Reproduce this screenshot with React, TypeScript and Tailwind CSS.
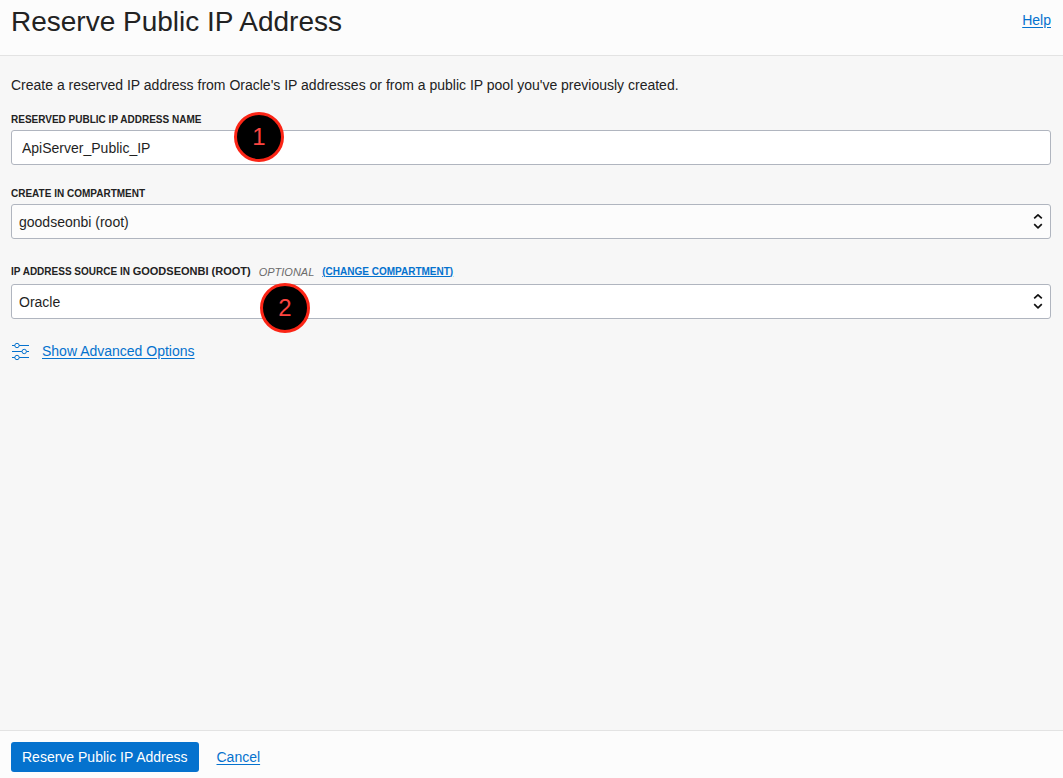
import type { ReactNode } from 'react';

const control =
  'block h-[35px] w-full appearance-none rounded-[3px] border border-[#b0b5bf] text-sm text-[#1f1f1f] outline-none focus:border-[#0572ce]';
const labelText = 'text-[10px] leading-4 font-bold uppercase text-[#222]';
const link = 'text-[#0572ce] underline underline-offset-2';

function StepBadge({ step, className }: { step: number; className: string }) {
  return (
    <span
      className={`pointer-events-none absolute flex size-[50px] items-center justify-center rounded-full border-3 border-[#fb2516] bg-black text-2xl text-[#fc4540] ${className}`}
    >
      {step}
    </span>
  );
}

function SelectBox({ id, className, children }: { id: string; className: string; children: ReactNode }) {
  return (
    <div className="relative">
      <select id={id} className={`${control} pr-8 pl-[7px] ${className}`}>
        {children}
      </select>
      <svg
        className="pointer-events-none absolute top-[9px] right-[8px]"
        width="10"
        height="17"
        viewBox="0 0 10 17"
        fill="none"
        stroke="#111"
        strokeWidth="1.7"
        strokeLinejoin="round"
        aria-hidden="true"
      >
        <path d="M1.2 5.4 5 1.8 8.8 5.4M1.2 11.2 5 14.8 8.8 11.2" />
      </svg>
    </div>
  );
}

function SlidersIcon() {
  return (
    <svg width="19" height="20" viewBox="0 0 19 20" fill="none" stroke="#0572ce" strokeWidth="1" aria-hidden="true">
      <path d="M1 4.500h2.900M8.100 4.500H18M1 10.500h9.900M15.500 10.500H18M1 16.500h2.900M8.100 16.500H18" />
      <circle cx="6" cy="4.500" r="2.200" />
      <circle cx="13.200" cy="10.500" r="2.200" />
      <circle cx="6" cy="16.500" r="2.200" />
    </svg>
  );
}

export default function App() {
  return (
    <form
      className="flex min-h-screen flex-col bg-[#f7f7f7] font-['Liberation_Sans',Arial,sans-serif] text-sm text-[#222]"
      onSubmit={(event) => event.preventDefault()}
    >
      <header className="flex items-start justify-between border-b border-[#e3e3e3] bg-[#fcfcfc] pr-3 pb-3 pl-[11px]">
        <h1 className="text-[28px] leading-[43px]">Reserve Public IP Address</h1>
        <a href="#help" className={`pt-[10px] leading-5 ${link}`}>
          Help
        </a>
      </header>

      <main className="grow pt-[19px] pr-3 pl-[11px]">
        <p className="leading-5">
          Create a reserved IP address from Oracle's IP addresses or from a public IP pool you've previously created.
        </p>

        <div className="relative mt-[17px] flex flex-col gap-[2px]">
          <label htmlFor="ip-name" className={labelText}>
            Reserved Public IP Address Name
          </label>
          <input id="ip-name" type="text" defaultValue="ApiServer_Public_IP" className={`${control} bg-white px-[10px]`} />
          <StepBadge step={1} className="top-0 left-[223px]" />
        </div>

        <div className="mt-[21px] flex flex-col gap-[2px]">
          <label htmlFor="compartment" className={labelText}>
            Create in Compartment
          </label>
          <SelectBox id="compartment" className="bg-[#fcfcfc]">
            <option>goodseonbi (root)</option>
          </SelectBox>
        </div>

        <div className="relative mt-6 flex flex-col gap-1">
          <div className="flex items-center gap-2">
            <label htmlFor="ip-source" className={labelText}>
              IP Address Source in <b className="text-[11px]">goodseonbi (root)</b>
            </label>
            <span className="text-[11px] leading-4 text-[#6b6b6b] uppercase italic">Optional</span>
            <a href="#change-compartment" className="text-[10px] leading-4 font-bold text-[#0572ce] uppercase underline">
              (Change Compartment)
            </a>
          </div>
          <SelectBox id="ip-source" className="bg-white">
            <option>Oracle</option>
          </SelectBox>
          <StepBadge step={2} className="top-5 left-[249px]" />
        </div>

        <a href="#advanced" className={`mt-[22px] inline-flex items-center gap-3 leading-5 ${link}`}>
          <SlidersIcon />
          Show Advanced Options
        </a>
      </main>

      <footer className="flex items-center gap-[18px] border-t border-[#e3e3e3] bg-[#fcfcfc] px-[11px] pt-[11px] pb-[6px]">
        <button type="submit" className="h-[30px] rounded-[3px] bg-[#0572ce] px-[11px] text-white">
          Reserve Public IP Address
        </button>
        <a href="#cancel" className={link}>
          Cancel
        </a>
      </footer>
    </form>
  );
}
